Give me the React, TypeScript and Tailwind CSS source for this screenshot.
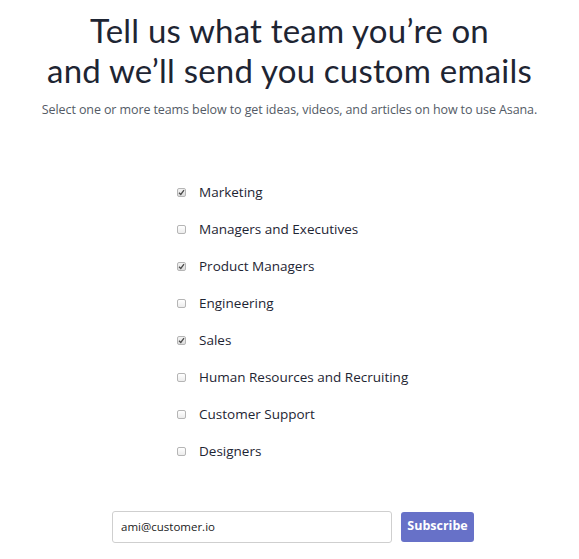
import { useState } from 'react'

const TEAMS = [
  { name: 'Marketing', checked: true },
  { name: 'Managers and Executives', checked: false },
  { name: 'Product Managers', checked: true },
  { name: 'Engineering', checked: false },
  { name: 'Sales', checked: true },
  { name: 'Human Resources and Recruiting', checked: false },
  { name: 'Customer Support', checked: false },
  { name: 'Designers', checked: false },
]

function Box({ checked, onClick }: { checked: boolean; onClick: () => void }) {
  return (
    <button
      onClick={onClick}
      className={`w-[9px] h-[9px] rounded-[2px] border border-[#b5b5b5] bg-gradient-to-b flex items-center justify-center shrink-0 ${
        checked ? 'from-[#f4f4f4] to-[#dcdcdc]' : 'from-white to-[#ececec]'
      }`}
    >
      {checked && (
        <svg width="7" height="7" viewBox="0 0 7 7">
          <path d="M1 3.8 L2.8 5.5 L6 1.2" stroke="#4a4a4a" strokeWidth="1.3" fill="none" />
        </svg>
      )}
    </button>
  )
}

export default function App() {
  const [teams, setTeams] = useState(TEAMS)
  const [email, setEmail] = useState('ami@customer.io')

  return (
    <main className="w-[579px] h-[559px] bg-white font-['Open_Sans',sans-serif] overflow-hidden">
      <div className="pt-[10px] text-center">
        <h1 className="font-['Lato',sans-serif] text-[33px] leading-[40px] text-[#1e2533] tracking-[0.2px]">
          Tell us what team you’re on
          <br />
          and we’ll send you custom emails
        </h1>
        <p className="mt-[11px] text-[12.5px] text-[#545b66] tracking-[-0.1px]">
          Select one or more teams below to get ideas, videos, and articles on how to use Asana.
        </p>
      </div>

      <div className="mt-[64px] ml-[177px] flex flex-col gap-[20px]">
        {teams.map((t, i) => (
          <label key={t.name} className="flex items-center h-[17px] gap-[13px] text-[13.5px] text-[#1e2533]">
            <Box
              checked={t.checked}
              onClick={() => setTeams(teams.map((x, j) => (j === i ? { ...x, checked: !x.checked } : x)))}
            />
            {t.name}
          </label>
        ))}
      </div>

      <div className="mt-[51px] flex justify-center gap-[9px] pl-[7px]">
        <input
          value={email}
          onChange={(e) => setEmail(e.target.value)}
          className="w-[280px] h-[32px] border border-[#cfcfcf] rounded-[3px] px-[8px] text-[11.5px] text-[#1a1a1a] outline-none"
        />
        <button className="w-[73px] h-[30px] mt-[1px] rounded-[3px] bg-[#6771c8] text-white text-[12.5px] font-bold">
          Subscribe
        </button>
      </div>
    </main>
  )
}
